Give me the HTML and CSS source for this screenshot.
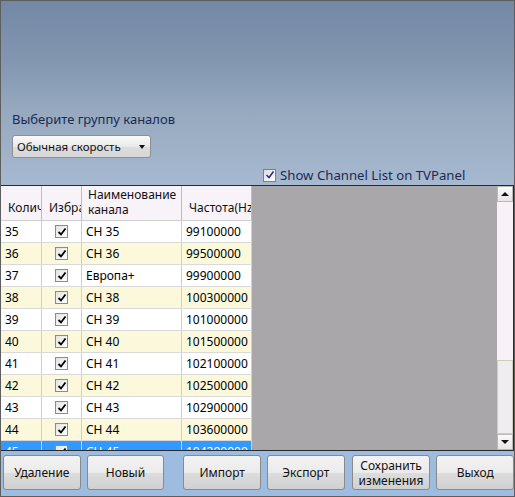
FILE: index.html
```html
<!DOCTYPE html>
<html lang="ru">
<head>
  <meta charset="UTF-8">
  <title>Каналы</title>
<link rel="stylesheet" href="styles.css">
</head>
<body>
  <div class="window">
    <div class="top-panel">
      <div class="group-label">Выберите группу каналов</div>
      <div class="group-select">
        <span>Обычная скорость</span>
        <span class="arrow"></span>
      </div>
      <label class="show-row">
        <span class="box blue"><svg viewBox="0 0 10 10" width="10" height="10"><path d="M1.5 5 L4 7.5 L8.5 1.5" fill="none" stroke="#2a2f8a" stroke-width="1.6"/></svg></span>
        Show Channel List on TVPanel
      </label>
    </div>

    <div class="grid">
      <div class="table" id="table">
        <div class="row head">
          <div class="cell">Колич</div>
          <div class="cell">Избра</div>
          <div class="cell two">Наименование<br>канала</div>
          <div class="cell">Частота(Hz</div>
        </div>
      </div>
      <div class="filler"></div>
      <div class="scrollbar">
        <div class="sb-btn"><span class="tri up"></span></div>
        <div class="sb-track"></div>
        <div class="sb-thumb"></div>
        <div class="sb-btn"><span class="tri down"></span></div>
      </div>
    </div>

    <div class="buttons">
      <button class="btn">Удаление</button>
      <button class="btn">Новый</button>
      <button class="btn wide-gap">Импорт</button>
      <button class="btn">Экспорт</button>
      <button class="btn two-line">Сохранить<br>изменения</button>
      <button class="btn">Выход</button>
    </div>
  </div>

  <script>
// channel rows
const channels = [
  [35, 'CH 35', '99100000'],
  [36, 'CH 36', '99500000'],
  [37, 'Европа+', '99900000'],
  [38, 'CH 38', '100300000'],
  [39, 'CH 39', '101000000'],
  [40, 'CH 40', '101500000'],
  [41, 'CH 41', '102100000'],
  [42, 'CH 42', '102500000'],
  [43, 'CH 43', '102900000'],
  [44, 'CH 44', '103600000'],
  [45, 'CH 45', '104200000']
];

const table = document.getElementById('table');
const check = '<span class="box"><svg viewBox="0 0 10 10" width="10" height="10"><path d="M1.5 5 L4 7.5 L8.5 1.5" fill="none" stroke="#000" stroke-width="1.8"/></svg></span>';

channels.forEach((ch, i) => {
  const row = document.createElement('div');
  row.className = 'row';
  if (i % 2 === 1) row.classList.add('alt');
  if (i === channels.length - 1) row.classList.add('selected');
  row.innerHTML = `
    <div class="cell">${ch[0]}</div>
    <div class="cell center">${check}</div>
    <div class="cell">${ch[1]}</div>
    <div class="cell">${ch[2]}</div>
  `;
  table.appendChild(row);
});
  </script>
</body>
</html>
```

FILE: styles.css
```css
/* General */
body {
  margin: 0;
  font-family: 'Noto Sans', 'Open Sans', sans-serif;
}

.window {
  width: 515px;
  height: 497px;
  box-sizing: border-box;
  border: 1px solid #5e5e5e;
  background: linear-gradient(#7388a5 0px, #8296b0 60px, #96a9bf 110px, #a6b9d0 184px);
  display: flex;
  flex-direction: column;
  overflow: hidden;
}

/* Top panel */
.top-panel {
  height: 184px;
  flex-shrink: 0;
  padding: 110px 0 0 11px;
  box-sizing: border-box;
  display: flex;
  flex-direction: column;
}

.group-label {
  font-size: 13px;
  line-height: 16px;
  color: #1c2a52;
}

.group-select {
  margin-top: 8px;
  width: 139px;
  height: 23px;
  box-sizing: border-box;
  border: 1px solid #8e8f8f;
  border-radius: 3px;
  background: linear-gradient(#fafafa, #e9e9e9 50%, #dcdcdc 51%, #d7d7d7);
  display: flex;
  align-items: center;
  justify-content: space-between;
  padding: 0 5px 0 4px;
  font-size: 11.5px;
  color: #111;
}

.arrow {
  width: 0;
  height: 0;
  border-left: 3.5px solid transparent;
  border-right: 3.5px solid transparent;
  border-top: 4px solid #111;
}

.show-row {
  margin-top: 9px;
  padding-left: 251px;
  display: flex;
  align-items: center;
  gap: 4px;
  font-size: 13.2px;
  line-height: 16px;
  color: #1c2a52;
}

/* Checkbox */
.box {
  width: 11px;
  height: 11px;
  border: 1px solid #8c8c8c;
  background: linear-gradient(135deg, #e4e4e4, #fdfdfd);
  display: inline-flex;
  align-items: center;
  justify-content: center;
}

.box.blue {
  border-color: #7f7f7f;
  background: linear-gradient(135deg, #dcdcdc, #ffffff);
}

/* Grid */
.grid {
  height: 264px;
  flex-shrink: 0;
  border-top: 1px solid #2a2a2a;
  border-bottom: 1px solid #2a2a2a;
  display: flex;
  background: #a9a7aa;
}

.table {
  width: 251px;
  overflow: hidden;
  background: #fff;
}

.row {
  display: grid;
  grid-template-columns: 41px 40px 100px 70px;
  height: 22px;
  box-sizing: border-box;
  border-bottom: 1px solid #d9d9d9;
  font-size: 12px;
  color: #000;
  background: #fff;
}

.row.alt {
  background: #fbf8dc;
}

.row.selected {
  background: #3399ff;
  color: #fff;
}

.cell {
  border-right: 1px solid #cfcfcf;
  padding-left: 4px;
  display: flex;
  align-items: center;
  white-space: nowrap;
  overflow: hidden;
}

.cell.center {
  justify-content: center;
  padding-left: 0;
}

.row.head {
  height: 35px;
  background: #f8f3f8;
  border-bottom: 1px solid #cfcfcf;
}

.row.head .cell {
  border-right: 1px solid #bdbdbd;
  align-items: flex-end;
  padding: 0 0 5px 7px;
  line-height: 15px;
  color: #111;
}

.row.head .cell.two {
  padding-left: 6px;
  padding-bottom: 3px;
}

.filler {
  flex: 1;
}

/* Scrollbar */
.scrollbar {
  width: 16px;
  background: #f8f1f8;
  display: flex;
  flex-direction: column;
  border-right: 1px solid #2a2a2a;
}

.sb-btn {
  height: 16px;
  box-sizing: border-box;
  border: 1px solid #bbbbb4;
  background: linear-gradient(#fbfbfb, #e6e6e6);
  display: flex;
  align-items: center;
  justify-content: center;
}

.sb-track {
  flex: 1;
}

.sb-thumb {
  height: 74px;
  box-sizing: border-box;
  border: 1px solid #cfceb8;
  background: #f0edf0;
}

.tri {
  width: 0;
  height: 0;
  border-left: 4px solid transparent;
  border-right: 4px solid transparent;
}

.tri.up {
  border-bottom: 4px solid #111;
}

.tri.down {
  border-top: 4px solid #111;
}

/* Buttons */
.buttons {
  flex: 1;
  background: #9dbce0;
  display: flex;
  padding: 4px 0 0 2px;
  gap: 6px;
}

.btn {
  width: 78px;
  height: 35px;
  box-sizing: border-box;
  border: 1px solid #8a8a8a;
  border-radius: 3px;
  background: linear-gradient(#f3f3f3, #ebebeb 50%, #dddddd 51%, #d0d0d0);
  font-family: 'Noto Sans', 'Open Sans', sans-serif;
  font-size: 12px;
  color: #111;
  padding: 0;
  line-height: 15px;
}

.btn.wide-gap {
  margin-left: 13px;
}

.btn.two-line {
  width: 79px;
  margin-left: 1px;
}
```
